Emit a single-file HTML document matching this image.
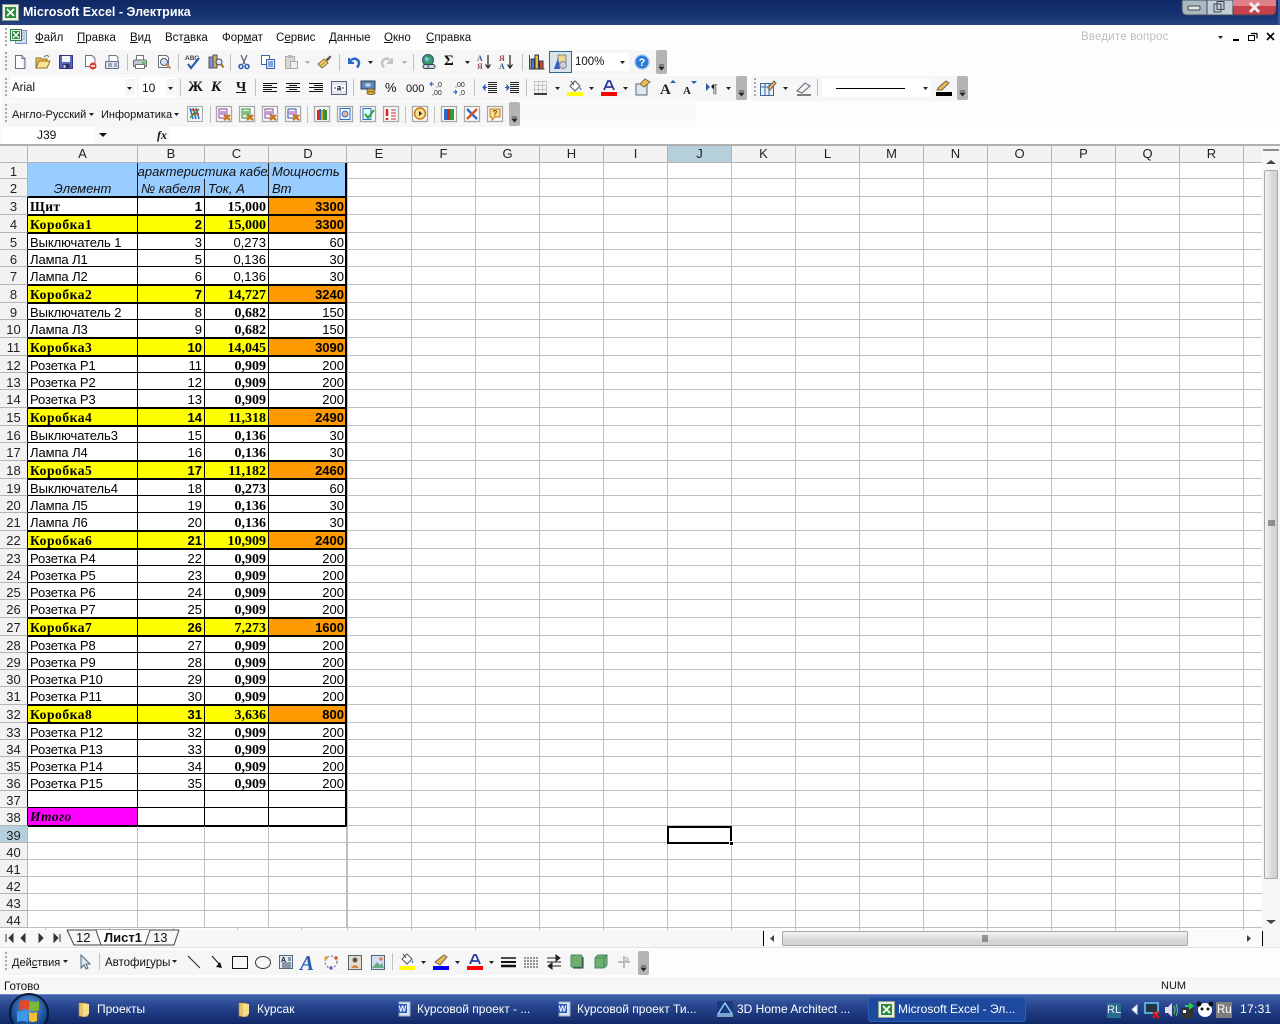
<!DOCTYPE html>
<html lang="ru"><head><meta charset="utf-8"><title>Microsoft Excel - Электрика</title>
<style>
html,body{margin:0;padding:0;width:1280px;height:1024px;overflow:hidden;background:#fdfdfd}
body{position:relative;font:12px "Liberation Sans","Noto Sans CJK SC",sans-serif;color:#000}
.a{position:absolute}
.l{position:absolute;white-space:nowrap;line-height:14px;font-size:11.5px;color:#111}
.m{font-size:11.5px}
#title{left:0;top:0;width:1280px;height:25px;background:linear-gradient(#0f2864,#14306f 50%,#27427f)}
#sheet{left:0;top:146px;width:1262px;height:784px;overflow:hidden;background:#fff repeating-linear-gradient(90deg,#c0c0c0 0 1px,transparent 1px 64px) 347px 0}
table{position:absolute;left:0;top:0;border-collapse:separate;border-spacing:0;table-layout:fixed;width:1262px}
tr{height:17px}tr.k{height:18px}tr.hd{height:17px}tr.r1{height:16px}
td,th{box-sizing:border-box;padding:4px 0 0;vertical-align:top;white-space:nowrap;font:13px/12px "Liberation Sans","Noto Sans CJK SC",sans-serif;color:#000}
td{background:#fff}
th{background:#f2f2f2;font-weight:normal;text-align:center;color:#222;border-right:1px solid #b4b4b4;border-bottom:1px solid #b4b4b4}
tr.hd th{padding-top:1px;line-height:14px}
tr.r1 th{padding-top:3px}
th.s{background:#b6cfdd}
th span{flex:none;box-sizing:border-box;width:64px;padding:1px 0;border-right:1px solid #b4b4b4}
td.e{border-bottom:1px solid #c0c0c0;background:none}
tr.g td.c{border-right:1px solid #c0c0c0;border-bottom:1px solid #c0c0c0}
tr.d th{border-right-color:#000}
tr.d td{text-align:right;padding-right:2px;border-right:1px solid #000;border-bottom:1px solid #000}
tr.x td{padding-top:3px}
tr.d td:nth-child(2){text-align:left;padding-left:2px;padding-right:0;letter-spacing:-.08px}
tr.d td:nth-child(4){font:bold 14px/10px "Liberation Serif",serif;padding-top:6px}
tr.x td:nth-child(4){padding-top:5px}
tr.p td:nth-child(4){font:13px/12px "Liberation Sans",sans-serif;padding-top:4px}
tr.x.p td:nth-child(4){padding-top:3px}
tr.d td:nth-child(5){border-right:2px solid #000;padding-right:1px}
tr.d td:nth-child(6){border-right:0;border-bottom:1px solid #c0c0c0;padding:0;background:none}
tr.x td:nth-child(-n+5){border-top:1px solid #000}
tr.y td:nth-child(-n+4){background:#ff0}
tr.y td:nth-child(2){font:bold 13.5px/15px "Liberation Serif",serif;letter-spacing:.55px}
tr.y td:nth-child(3){font-weight:bold}
tr.y td:nth-child(5),tr.o td:nth-child(5){background:#f90;font-weight:bold}
tr.y td,tr.o td{padding-top:.5px!important;line-height:15px!important}
tr.y td:nth-child(4),tr.o td:nth-child(4){padding-top:4px!important;line-height:12px!important}
td.b{background:#9cf;font-style:italic;border-right:1px solid #222;padding-left:3px;color:#111}
tr.r1 td{padding-top:3px}
td.bb{border-bottom:1px solid #000}
#sel{left:667px;top:826px;width:65px;height:18px;box-sizing:border-box;border:2px solid #000}
#han{left:729px;top:841px;background:#000;border:1px solid #fff;box-sizing:content-box;width:3px;height:3px}
.tb{font-size:12px;color:#fff;position:absolute;top:1002px;line-height:15px;white-space:nowrap}
</style></head><body>

<div class="a" id="title"></div>
<div class="a" style="left:23px;top:5px;color:#fff;font:bold 12.5px/15px 'Liberation Sans',sans-serif;white-space:nowrap">Microsoft Excel - Электрика</div>

<!-- toolbars bands -->
<div class="a" style="left:2px;top:50px;width:660px;height:25px;background:#f6f6f6;border-radius:3px"></div>
<div class="a" style="left:2px;top:76px;width:740px;height:25px;background:#f6f6f6;border-radius:3px"></div>
<div class="a" style="left:751px;top:76px;width:212px;height:25px;background:#f6f6f6;border-radius:3px"></div>
<div class="a" style="left:2px;top:102px;width:515px;height:25px;background:#f6f6f6;border-radius:3px"></div>
<div class="a" style="left:517px;top:102px;width:180px;height:25px;background:#fafafa"></div>
<!-- white inputs -->
<div class="a" style="left:10px;top:77px;width:127px;height:20px;background:#fff"></div>
<div class="a" style="left:125px;top:79px;width:10px;height:16px;background:#f5f5f5"></div>
<div class="a" style="left:139px;top:77px;width:37px;height:20px;background:#fff"></div>
<div class="a" style="left:166px;top:79px;width:9px;height:16px;background:#f5f5f5"></div>
<div class="a" style="left:573px;top:53px;width:56px;height:18px;background:#fff"></div>
<div class="a" style="left:822px;top:79px;width:109px;height:18px;background:#fff"></div>
<div class="a" style="left:1078px;top:27px;width:140px;height:19px;background:#fff"></div>
<!-- formula bar -->
<div class="a" style="left:0;top:127px;width:1280px;height:17px;background:#f8f8f8"></div>
<div class="a" style="left:2px;top:127px;width:92px;height:17px;background:#fff"></div>
<div class="a" style="left:169px;top:127px;width:1111px;height:17px;background:#fff"></div>
<div class="a" style="left:0;top:144px;width:1280px;height:2px;background:#b0b0b0"></div>

<!-- menu -->
<span class="l m" style="left:35px;top:31px"><u>Ф</u>айл</span>
<span class="l m" style="left:77px;top:31px"><u>П</u>равка</span>
<span class="l m" style="left:130px;top:31px"><u>В</u>ид</span>
<span class="l m" style="left:165px;top:31px">Вст<u>а</u>вка</span>
<span class="l m" style="left:222px;top:31px">Фор<u>м</u>ат</span>
<span class="l m" style="left:276px;top:31px">С<u>е</u>рвис</span>
<span class="l m" style="left:329px;top:31px"><u>Д</u>анные</span>
<span class="l m" style="left:384px;top:31px"><u>О</u>кно</span>
<span class="l m" style="left:426px;top:31px"><u>С</u>правка</span>
<span class="l" style="left:1081px;top:30px;color:#bbb;letter-spacing:.2px">Введите вопрос</span>

<span class="l" style="left:12px;top:81px">Arial</span>
<span class="l" style="left:142px;top:81px;font-size:12px">10</span>
<span class="l" style="left:575px;top:55px">100%</span>
<span class="l" style="left:12px;top:108px;font-size:11px">Англо-Русский</span>
<span class="l" style="left:101px;top:108px;font-size:11px">Информатика</span>
<span class="l" style="left:37px;top:128px;font-size:12px">J39</span>
<span class="l" style="left:157px;top:128px;font:italic bold 12px/14px 'Liberation Serif',serif">fx</span>
<span class="l" style="left:188px;top:80px;font:bold 15px/15px 'Liberation Serif',serif">Ж</span>
<span class="l" style="left:211px;top:80px;font:italic bold 15px/15px 'Liberation Serif',serif">К</span>
<span class="l" style="left:236px;top:80px;font:bold 14px/15px 'Liberation Serif',serif;text-decoration:underline">Ч</span>
<span class="l" style="left:385px;top:81px;font-size:13px">%</span>
<span class="l" style="left:406px;top:82px;font-size:11px">000</span>
<span class="l" style="left:444px;top:54px;font:bold 15px/15px 'Liberation Serif',serif">Σ</span>

<!-- sheet -->
<div class="a" id="sheet">
<table>
<colgroup><col style="width:28px"><col style="width:110px"><col style="width:67px"><col style="width:64px"><col style="width:78px"><col></colgroup>
<tr class="hd"><th></th><th>A</th><th>B</th><th>C</th><th style="padding-left:1px">D</th><th style="padding:0;border-right:0"><div style="display:flex;width:915px"><span style="width:65px">E</span><span>F</span><span>G</span><span>H</span><span>I</span><span style="background:#b6cfdd">J</span><span>K</span><span>L</span><span>M</span><span>N</span><span>O</span><span>P</span><span>Q</span><span>R</span></div></th></tr>
<tr class="r1"><th>1</th><td class="b bb" rowspan="2" style="text-align:center;vertical-align:bottom;padding:0;line-height:14px">Элемент</td><td class="b" colspan="2" style="padding-left:0;overflow:hidden;max-width:131px"><div style="margin-left:-9px">Характеристика кабеля</div></td><td class="b" style="border-right:2px solid #000">Мощность</td><td class="e"></td></tr>
<tr class="k"><th>2</th><td class="b bb">№ кабеля</td><td class="b bb">Ток, А</td><td class="b bb" style="border-right:2px solid #000">Вт</td><td class="e"></td></tr>
<tr class="d k x o"><th>3</th><td style="font:bold 13.5px/15px 'Liberation Serif',serif;letter-spacing:.4px">Щит</td><td style="font-weight:bold">1</td><td>15,000</td><td>3300</td><td></td></tr>
<tr class="d k x y"><th>4</th><td>Коробка1</td><td>2</td><td>15,000</td><td>3300</td><td></td></tr>
<tr class="d x p"><th>5</th><td>Выключатель 1</td><td>3</td><td>0,273</td><td>60</td><td></td></tr>
<tr class="d p"><th>6</th><td>Лампа Л1</td><td>5</td><td>0,136</td><td>30</td><td></td></tr>
<tr class="d k p"><th>7</th><td>Лампа Л2</td><td>6</td><td>0,136</td><td>30</td><td></td></tr>
<tr class="d k x y"><th>8</th><td>Коробка2</td><td>7</td><td>14,727</td><td>3240</td><td></td></tr>
<tr class="d x"><th>9</th><td>Выключатель 2</td><td>8</td><td>0,682</td><td>150</td><td></td></tr>
<tr class="d k"><th>10</th><td>Лампа Л3</td><td>9</td><td>0,682</td><td>150</td><td></td></tr>
<tr class="d k x y"><th>11</th><td>Коробка3</td><td>10</td><td>14,045</td><td>3090</td><td></td></tr>
<tr class="d x"><th>12</th><td>Розетка Р1</td><td>11</td><td>0,909</td><td>200</td><td></td></tr>
<tr class="d"><th>13</th><td>Розетка Р2</td><td>12</td><td>0,909</td><td>200</td><td></td></tr>
<tr class="d k"><th>14</th><td>Розетка Р3</td><td>13</td><td>0,909</td><td>200</td><td></td></tr>
<tr class="d k x y"><th>15</th><td>Коробка4</td><td>14</td><td>11,318</td><td>2490</td><td></td></tr>
<tr class="d x"><th>16</th><td>Выключатель3</td><td>15</td><td>0,136</td><td>30</td><td></td></tr>
<tr class="d k"><th>17</th><td>Лампа Л4</td><td>16</td><td>0,136</td><td>30</td><td></td></tr>
<tr class="d k x y"><th>18</th><td>Коробка5</td><td>17</td><td>11,182</td><td>2460</td><td></td></tr>
<tr class="d x"><th>19</th><td>Выключатель4</td><td>18</td><td>0,273</td><td>60</td><td></td></tr>
<tr class="d"><th>20</th><td>Лампа Л5</td><td>19</td><td>0,136</td><td>30</td><td></td></tr>
<tr class="d k"><th>21</th><td>Лампа Л6</td><td>20</td><td>0,136</td><td>30</td><td></td></tr>
<tr class="d k x y"><th>22</th><td>Коробка6</td><td>21</td><td>10,909</td><td>2400</td><td></td></tr>
<tr class="d x"><th>23</th><td>Розетка Р4</td><td>22</td><td>0,909</td><td>200</td><td></td></tr>
<tr class="d"><th>24</th><td>Розетка Р5</td><td>23</td><td>0,909</td><td>200</td><td></td></tr>
<tr class="d"><th>25</th><td>Розетка Р6</td><td>24</td><td>0,909</td><td>200</td><td></td></tr>
<tr class="d k"><th>26</th><td>Розетка Р7</td><td>25</td><td>0,909</td><td>200</td><td></td></tr>
<tr class="d k x y"><th>27</th><td>Коробка7</td><td>26</td><td>7,273</td><td>1600</td><td></td></tr>
<tr class="d x"><th>28</th><td>Розетка Р8</td><td>27</td><td>0,909</td><td>200</td><td></td></tr>
<tr class="d"><th>29</th><td>Розетка Р9</td><td>28</td><td>0,909</td><td>200</td><td></td></tr>
<tr class="d"><th>30</th><td>Розетка Р10</td><td>29</td><td>0,909</td><td>200</td><td></td></tr>
<tr class="d k"><th>31</th><td>Розетка Р11</td><td>30</td><td>0,909</td><td>200</td><td></td></tr>
<tr class="d k x y"><th>32</th><td>Коробка8</td><td>31</td><td>3,636</td><td>800</td><td></td></tr>
<tr class="d x"><th>33</th><td>Розетка Р12</td><td>32</td><td>0,909</td><td>200</td><td></td></tr>
<tr class="d"><th>34</th><td>Розетка Р13</td><td>33</td><td>0,909</td><td>200</td><td></td></tr>
<tr class="d"><th>35</th><td>Розетка Р14</td><td>34</td><td>0,909</td><td>200</td><td></td></tr>
<tr class="d"><th>36</th><td>Розетка Р15</td><td>35</td><td>0,909</td><td>200</td><td></td></tr>
<tr class="d"><th>37</th><td></td><td></td><td></td><td></td><td></td></tr>
<tr class="d k"><th>38</th><td style="background:#f0f;font:italic bold 13.5px/14px 'Liberation Serif',serif;letter-spacing:.5px;padding-top:2px">Итого</td><td></td><td></td><td></td><td></td></tr>
<tr class="g"><th class="s">39</th><td class="c" style="border-top:1px solid #000"></td><td class="c" style="border-top:1px solid #000"></td><td class="c" style="border-top:1px solid #000"></td><td class="c" style="border-top:1px solid #000"></td><td class="e"></td></tr>
<tr class="g"><th>40</th><td class="c"></td><td class="c"></td><td class="c"></td><td class="c"></td><td class="e"></td></tr>
<tr class="g"><th>41</th><td class="c"></td><td class="c"></td><td class="c"></td><td class="c"></td><td class="e"></td></tr>
<tr class="g"><th>42</th><td class="c"></td><td class="c"></td><td class="c"></td><td class="c"></td><td class="e"></td></tr>
<tr class="g"><th>43</th><td class="c"></td><td class="c"></td><td class="c"></td><td class="c"></td><td class="e"></td></tr>
<tr class="g"><th>44</th><td class="c"></td><td class="c"></td><td class="c"></td><td class="c"></td><td class="e"></td></tr>
</table>
</div>
<div class="a" id="sel"></div><div class="a" id="han"></div>

<!-- tab bar & scrollbars backgrounds -->
<div class="a" style="left:0;top:930px;width:1280px;height:17px;background:#f7f7f7"></div>
<div class="a" style="left:1262px;top:146px;width:18px;height:801px;background:#f6f6f6"></div>
<div class="a" style="left:0;top:947px;width:1280px;height:1px;background:#e4e4e4"></div>
<div class="a" style="left:764px;top:931px;width:498px;height:15px;background:#fbfbfb"></div>
<div class="a" style="left:782px;top:931px;width:406px;height:15px;box-sizing:border-box;border:1px solid #a8a8a8;border-radius:2px;background:linear-gradient(#f4f4f4,#d8d8d8 60%,#cfcfcf)"></div>
<div class="a" style="left:1264px;top:170px;width:14px;height:709px;box-sizing:border-box;border:1px solid #a8a8a8;border-radius:2px;background:linear-gradient(90deg,#f4f4f4,#d8d8d8 60%,#cfcfcf)"></div>
<span class="l" style="left:76px;top:931px;font-size:13px">12</span>
<span class="l" style="left:153px;top:931px;font-size:13px">13</span>

<!-- drawing toolbar -->
<div class="a" style="left:2px;top:950px;width:640px;height:25px;background:#f6f6f6;border-radius:3px"></div>
<span class="l" style="left:12px;top:956px;font-size:11px">Дей<u>с</u>твия</span>
<span class="l" style="left:105px;top:956px">Автофи<u>г</u>уры</span>

<!-- status -->
<div class="a" style="left:0;top:977px;width:1280px;height:17px;background:#f6f6f6"></div>
<span class="l" style="left:4px;top:980px">Готово</span>
<span class="l" style="left:1161px;top:979px;font-size:11px">NUM</span>

<!-- taskbar -->
<div class="a" style="left:0;top:994px;width:1280px;height:30px;background:linear-gradient(#3f60a8,#27458e 40%,#102866);border-top:1px solid #6f8bd6;box-sizing:border-box"></div>
<div class="a" style="left:868px;top:997px;width:158px;height:25px;background:#1d4a9f;border:1px solid #2d5cb4;border-radius:3px;box-sizing:border-box"></div>
<span class="tb" style="left:97px">Проекты</span>
<span class="tb" style="left:257px">Курсак</span>
<span class="tb" style="left:417px">Курсовой проект - ...</span>
<span class="tb" style="left:577px">Курсовой проект Ти...</span>
<span class="tb" style="left:737px">3D Home Architect ...</span>
<span class="tb" style="left:898px">Microsoft Excel - Эл...</span>
<div class="a" style="left:1107px;top:1003px;width:14px;height:15px;background:#2a6c8e"></div>
<span class="tb" style="left:1107px;top:1003px;font-size:11px;color:#e8f4ff">RL</span>
<div class="a" style="left:1216px;top:1002px;width:16px;height:16px;background:#7d7d7d"></div>
<span class="tb" style="left:1217px;top:1003px;font-size:11.5px">Ru</span>
<span class="tb" style="left:1240px;letter-spacing:.3px">17:31</span>

<svg class="a" style="left:0;top:0" width="1280" height="1024" viewBox="0 0 1280 1024">
<defs>
<radialGradient id="orb" cx=".5" cy=".35" r=".75"><stop offset="0" stop-color="#6aa0d8"/><stop offset=".6" stop-color="#1d4f96"/><stop offset="1" stop-color="#0d2c60"/></radialGradient>
<path id="ar" d="M0 0h5l-2.500 3z" fill="#222"/>
<g id="gr"><path d="M1 0v20" stroke="#a8a8a8" stroke-width="2" stroke-dasharray="2 2"/></g>
<g id="ch"><rect width="11" height="24" rx="2" fill="#b4b4b4"/><path d="M3 15h5M3 17h5l-2.500 3z" fill="#222" stroke="#222" stroke-width=".7"/></g>
<path id="sp" d="M0 0v17" stroke="#c0c0c0"/>
<g id="new"><path d="M3.500 1.500h6.500l3 3v10h-9.500z" fill="#fff" stroke="#6a6f80"/><path d="M10 1.500v3h3" fill="#dde" stroke="#6a6f80"/><path d="M12 5v9" stroke="#c8d0e0"/></g>
<g id="open"><path d="M1 14V4h5l1 1h5v2" fill="#e9bd57" stroke="#9a7520"/><path d="M1 14l3-7h11l-3 7z" fill="#fbe39a" stroke="#9a7520"/><path d="M9 3q3-3 5 0" stroke="#6a7a6a" fill="none"/></g>
<g id="save"><rect x="1.500" y="1.500" width="13" height="13" fill="#5a64b8" stroke="#34397f"/><rect x="4" y="2" width="8" height="6" fill="#f4f4fc"/><rect x="4.500" y="10" width="7" height="4.500" fill="#2a2f68"/><rect x="5.500" y="11" width="2" height="3" fill="#cfd0e8"/></g>
<g id="perm"><path d="M3.500 1.500h6.500l3 3v8h-9.500z" fill="#fff" stroke="#6a6f80"/><circle cx="11" cy="12" r="3.500" fill="#d93a2a"/><path d="M9 12h4" stroke="#fff" stroke-width="1.500"/></g>
<g id="mail"><path d="M5 1.500h7l2 2v6H5z" fill="#fff" stroke="#6a7590"/><rect x="1.500" y="7.500" width="13" height="7" rx="1" fill="#dfe6f2" stroke="#5a6a90"/><path d="M4 10h4M4 12h4M10 10h3M10 12h3" stroke="#667"/></g>
<g id="print"><path d="M4.500 6V1.500h7V6" fill="#fff" stroke="#777"/><path d="M1.500 7.500q0-1.500 2-1.500h9q2 0 2 1.500v5h-13z" fill="#c4c8d0" stroke="#666"/><rect x="3.500" y="10.500" width="9" height="4" fill="#fff" stroke="#777"/><rect x="10" y="8" width="3" height="1.500" fill="#2b2"/></g>
<g id="prev"><path d="M2.500 1.500h8l2 2v10h-10z" fill="#fff" stroke="#6a6f80"/><circle cx="8" cy="8" r="3.500" fill="#cfe4f5" stroke="#556"/><path d="M10.500 10.500l4 4" stroke="#c89040" stroke-width="2.200"/></g>
<g id="spell"><text x="0" y="6" font-family="Liberation Sans" font-size="6.500" font-weight="bold" fill="#444">ABC</text><path d="M3 10l3 4 8-10" stroke="#2a5ab4" stroke-width="2.200" fill="none"/></g>
<g id="res"><rect x="1" y="3" width="4" height="11" fill="#8a8ad0" stroke="#556"/><rect x="5" y="1" width="4" height="13" fill="#d0a860" stroke="#556"/><circle cx="11" cy="8" r="3" fill="#d6eafa" stroke="#445"/><path d="M13 10l2.500 3.500" stroke="#a07020" stroke-width="2"/></g>
<g id="cut"><path d="M5 1l4 9M11 1L7 10" stroke="#667" stroke-width="1.300"/><circle cx="5" cy="12.500" r="2" fill="none" stroke="#2a5ab4" stroke-width="1.500"/><circle cx="11" cy="12.500" r="2" fill="none" stroke="#2a5ab4" stroke-width="1.500"/></g>
<g id="copy"><rect x="1.500" y="1.500" width="8" height="9" fill="#fff" stroke="#3a64b0"/><rect x="6.500" y="5.500" width="8" height="9" fill="#dbe7f8" stroke="#3a64b0"/><path d="M8 8h5M8 10h5M8 12h5" stroke="#3a64b0"/></g>
<g id="paste"><rect x="2.500" y="2.500" width="9" height="12" fill="#d8d8d8" stroke="#aaa"/><rect x="5" y="1" width="4" height="3" fill="#bbb"/><rect x="7.500" y="7.500" width="7" height="7" fill="#eee" stroke="#aaa"/></g>
<g id="brush"><path d="M1 10l6-5 4 4-6 5z" fill="#f0d070" stroke="#8a7030"/><path d="M8.500 5.500L13 1.500l1.500 1.500-4 4.500z" fill="#6a5a50"/><path d="M3 12l5-4" stroke="#b09040"/></g>
<g id="undo"><path d="M3 4v5h5" fill="none" stroke="#2a66c4" stroke-width="2"/><path d="M4 8q3-5 7-2.500 4 3 0 8" fill="none" stroke="#2a66c4" stroke-width="2.500"/></g>
<g id="redo"><path d="M13 4v5H8" fill="none" stroke="#c4c4c4" stroke-width="2"/><path d="M12 8Q9 3 5 5.500q-4 3 0 8" fill="none" stroke="#c4c4c4" stroke-width="2.500"/></g>
<g id="link"><circle cx="8" cy="6" r="5.500" fill="#3a9a6a" stroke="#357"/><path d="M5 3l4 1-1 4-3-2z" fill="#7ac8e8"/><rect x="3" y="10.500" width="7" height="4" rx="2" fill="#cfd6e0" stroke="#345"/><rect x="8" y="10.500" width="7" height="4" rx="2" fill="#cfd6e0" stroke="#345"/></g>
<g id="az"><text x="0" y="7" font-family="Liberation Serif" font-size="8" font-weight="bold" fill="#35598f">А</text><text x="0" y="15" font-family="Liberation Serif" font-size="8" font-weight="bold" fill="#a05050">Я</text><path d="M11 1v12M8.500 10.500L11 14l2.500-3.500" stroke="#222" fill="none" stroke-width="1.200"/></g>
<g id="za"><text x="0" y="7" font-family="Liberation Serif" font-size="8" font-weight="bold" fill="#a05050">Я</text><text x="0" y="15" font-family="Liberation Serif" font-size="8" font-weight="bold" fill="#35598f">А</text><path d="M11 1v12M8.500 10.500L11 14l2.500-3.500" stroke="#222" fill="none" stroke-width="1.200"/></g>
<g id="chart"><path d="M.5 1v14h15" stroke="#445" fill="none"/><rect x="2" y="5" width="3.500" height="10" fill="#4a78c8" stroke="#334"/><rect x="6" y="1" width="3.500" height="14" fill="#e0c040" stroke="#334"/><rect x="10.500" y="7" width="3.500" height="8" fill="#c84a3a" stroke="#334"/></g>
<g id="draw"><rect x="6" y="1" width="8" height="8" fill="#e8d890" stroke="#887"/><path d="M2 15L6 4l2 11z" fill="#3a5ab8"/><circle cx="11" cy="11" r="3.500" fill="#ccd" stroke="#889"/></g>
<g id="help"><circle cx="8" cy="8" r="7" fill="#2f7ad8" stroke="#a4c8f0" stroke-width="1.300"/><text x="8" y="12" text-anchor="middle" font-family="Liberation Sans" font-weight="bold" font-size="11" fill="#fff">?</text></g>
<g id="al" stroke="#111"><path d="M1 3.500h14M1 5.500h9M1 7.500h14M1 9.500h9M1 11.500h14"/></g>
<g id="ac" stroke="#111"><path d="M1 3.500h14M4 5.500h8M1 7.500h14M4 9.500h8M1 11.500h14"/></g>
<g id="ar2" stroke="#111"><path d="M1 3.500h14M6 5.500h9M1 7.500h14M6 9.500h9M1 11.500h14"/></g>
<g id="merge"><rect x=".5" y="1.500" width="15" height="13" fill="#e0e6f4" stroke="#567"/><rect x="2" y="5" width="12" height="6" fill="#fff"/><path d="M3 8h2M11 8h2" stroke="#337"/><text x="8" y="10.500" text-anchor="middle" font-size="8" font-weight="bold" font-family="Liberation Sans" fill="#000">a</text></g>
<g id="cur"><rect x="1" y="1" width="14" height="8" fill="#5a84c0" stroke="#345"/><ellipse cx="8" cy="5" rx="3" ry="2" fill="#bcd"/><ellipse cx="11" cy="10.500" rx="4" ry="1.500" fill="#e0b030" stroke="#864"/><ellipse cx="11" cy="13" rx="4" ry="1.500" fill="#e0b030" stroke="#864"/></g>
<g id="dinc"><path d="M1 4h4M1 4l2-2M1 4l2 2" stroke="#2a5ab4" fill="none"/><text x="7" y="7" font-size="7" font-family="Liberation Sans" fill="#222">,0</text><text x="3" y="15" font-size="7" font-family="Liberation Sans" fill="#222">,00</text></g>
<g id="ddec"><text x="3" y="7" font-size="7" font-family="Liberation Sans" fill="#222">,00</text><path d="M1 12h4M5 12l-2-2M5 12l-2 2" stroke="#2a5ab4" fill="none"/><text x="7" y="15" font-size="7" font-family="Liberation Sans" fill="#222">,0</text></g>
<g id="ind1"><path d="M6 2.500h9M6 4.500h9M6 6.500h9M6 8.500h9M6 10.500h9M6 12.500h9" stroke="#222"/><path d="M5 7.500L1 7.500M1 7.500l2-2.500v5z" stroke="#2a5ab4" fill="#2a5ab4"/></g>
<g id="ind2"><path d="M6 2.500h9M6 4.500h9M6 6.500h9M6 8.500h9M6 10.500h9M6 12.500h9" stroke="#222"/><path d="M1 7.500h4M5 7.500l-2-2.500v5z" stroke="#2a5ab4" fill="#2a5ab4"/></g>
<g id="bord"><path d="M1.500 1.500v12M5.500 1.500v12M9.500 1.500v12M13.500 1.500v12M1.500 1.500h12M1.500 5.500h12M1.500 9.500h12" stroke="#999" stroke-dasharray="1 1" fill="none"/><path d="M1 14h13" stroke="#000" stroke-width="1.500"/></g>
<g id="fill"><path d="M3 7l5-5 5 5-5 5z" fill="#fff" stroke="#555"/><path d="M4 2l3 4" stroke="#444"/><path d="M13 8q2 2 1 3-2 0-1-3z" fill="#3a7ac8"/></g>
<g id="fc"><path d="M3 10L7 1h2l4 9M5 7h6" fill="none" stroke="#2a3a9a" stroke-width="1.800"/></g>
<g id="bk"><rect x=".5" y=".5" width="15" height="15" fill="#fcfcfa" stroke="#a8a8a8" stroke-width="1.300"/></g>
<g id="f1"><use href="#bk"/><rect x="3" y="3" width="8" height="9" fill="#fff" stroke="#8a3aa0"/><path d="M4 6h6M4 8h6" stroke="#8a3aa0"/><path d="M8 9l6 5M14 9l-6 5" stroke="#c87818" stroke-width="2.200"/></g>
<g id="f2"><use href="#bk"/><rect x="3" y="3" width="8" height="9" fill="#dff0d8" stroke="#2a8a3a"/><path d="M4 6h6M4 8h6" stroke="#2a8a3a"/><path d="M8 9l6 5M14 9l-6 5" stroke="#c87818" stroke-width="2.200"/></g>
<g id="f3"><use href="#bk"/><rect x="3" y="3" width="8" height="9" fill="#fff" stroke="#2a4ab0"/><path d="M4 6h6M4 8h6" stroke="#b03a9a"/><path d="M8 9l6 5M14 9l-6 5" stroke="#c87818" stroke-width="2.200"/></g>
<g id="f4"><use href="#bk"/><path d="M3 4h2v10H3z" fill="#d22"/><path d="M5 3h2v11H5z" fill="#2a6ad0"/><path d="M7 4h2v10H7z" fill="#e0a020"/><path d="M9 3h2v11H9z" fill="#2a9a3a"/><path d="M11 4h2v10h-2z" fill="#3a8a3a"/></g>
<g id="f5"><use href="#bk"/><rect x="3" y="2.500" width="10" height="11" fill="#fff" stroke="#2a6ad0"/><circle cx="8" cy="8" r="3" fill="#f0b0a0" stroke="#2a6ad0"/></g>
<g id="f6"><use href="#bk"/><rect x="3" y="2.500" width="8" height="11" fill="#dff" stroke="#2a6ad0"/><path d="M5 8l3 4 6-8" stroke="#2aa03a" stroke-width="2" fill="none"/></g>
<g id="f7"><use href="#bk"/><path d="M4 3v7M4 12v2" stroke="#d22" stroke-width="2.500"/><path d="M8 4h5M8 7h5M8 10h5M8 13h5" stroke="#d22"/></g>
<g id="f8"><use href="#bk"/><circle cx="8" cy="7.500" r="5.500" fill="#f8e090" stroke="#c87818" stroke-width="1.500"/><path d="M7 5l3 2.500L7 10z" fill="#222"/></g>
<g id="f9"><use href="#bk"/><path d="M3 3h3v11H3z" fill="#2a6ad0"/><path d="M6 3h3v11H6z" fill="#d22"/><path d="M9 3h4v11H9z" fill="#2a9a3a"/></g>
<g id="f10"><use href="#bk"/><path d="M3 3l10 10" stroke="#2a6ad0" stroke-width="2.500"/><path d="M13 3L3 13" stroke="#d8502a" stroke-width="2.500"/></g>
<g id="f11"><use href="#bk"/><path d="M3 3h10v8H8l-3 3v-3H3z" fill="#fbe08a" stroke="#c87818"/><text x="8" y="10" text-anchor="middle" font-size="8" font-weight="bold" font-family="Liberation Sans" fill="#642">?</text></g>
<g id="folder"><path d="M2 2h6l3 1v12l-3 1-6-1z" fill="#e8c468" stroke="#a88838" stroke-width=".6"/><path d="M6 3h6v10l-6 3z" fill="#f6dd90"/></g>
<g id="word"><rect x="2" y="1" width="11" height="14" fill="#d8e4f6" stroke="#9ab"/><rect x="1" y="3" width="9" height="9" fill="#2a5ab4"/><text x="5.500" y="10.500" text-anchor="middle" font-size="8" font-weight="bold" font-family="Liberation Sans" fill="#fff">W</text></g>
<g id="xl"><rect x=".5" y=".5" width="16" height="16" fill="#e9efe6" stroke="#8fa08f"/><rect x="3" y="3" width="11" height="11" fill="#2c8a3c"/><path d="M5 5l7 7M12 5l-7 7" stroke="#fff" stroke-width="1.800"/></g>
</defs>

<!-- title icon and window buttons -->
<use href="#xl" x="2" y="4"/>
<g>
<path d="M1182 0h25v15h-20q-5 0-5-5z" fill="#a8bac0" stroke="#404860"/>
<rect x="1188" y="6" width="12" height="4" rx="1" fill="#e4e4e4" stroke="#445"/>
<rect x="1207" y="0" width="26" height="15" fill="#c0ced4" stroke="#404860"/>
<rect x="1214" y="4" width="7" height="8" fill="none" stroke="#445"/><rect x="1217" y="1.500" width="7" height="8" fill="none" stroke="#445"/>
<path d="M1233 0h43v10q0 5-5 5h-38z" fill="#c8404a" stroke="#404860"/><path d="M1233 0h43v6h-43z" fill="#df8088"/>
<path d="M1250 3l9 9M1259 3l-9 9" stroke="#eee" stroke-width="3"/>
<rect x="1278" y="0" width="2" height="25" fill="#3a5aa0"/>
</g>
<!-- menu bar right -->
<use href="#ar" x="1218" y="36"/>
<path d="M1233 40h6" stroke="#000" stroke-width="2"/>
<rect x="1248.500" y="35.500" width="6" height="5" fill="none" stroke="#000"/><path d="M1251 33.500h6v5" stroke="#000" fill="none" stroke-width="1.200"/>
<path d="M1267 33l7 7M1274 33l-7 7" stroke="#000" stroke-width="1.600"/>
<!-- doc icon + menu gripper -->
<use href="#gr" x="5" y="28"/>
<rect x="15.500" y="30.500" width="11" height="13" fill="#d4e0f2" stroke="#7a90b8"/><path d="M22 33h3M22 36h3M22 39h3" stroke="#8aa"/>
<rect x="10.500" y="29.500" width="11" height="11" fill="#e9efe6" stroke="#2c7a3c"/><rect x="12" y="31" width="8" height="8" fill="#2c8a3c"/><path d="M13 32l6 6M19 32l-6 6" stroke="#fff" stroke-width="1.400"/>

<!-- toolbar 1 -->
<use href="#gr" x="5" y="52"/>
<use href="#new" x="12" y="54"/><use href="#open" x="35" y="54"/><use href="#save" x="58" y="54"/><use href="#perm" x="82" y="54"/><use href="#mail" x="104" y="54"/>
<use href="#sp" x="127.500" y="54"/>
<use href="#print" x="132" y="54"/><use href="#prev" x="156" y="54"/>
<use href="#sp" x="178.500" y="54"/>
<use href="#spell" x="185" y="54"/><use href="#res" x="208" y="54"/>
<use href="#sp" x="230.500" y="54"/>
<use href="#cut" x="236" y="54"/><use href="#copy" x="260" y="54"/><use href="#paste" x="283" y="54"/><use href="#ar" x="305" y="61" opacity=".35"/><use href="#brush" x="317" y="54"/>
<use href="#sp" x="339.500" y="54"/>
<use href="#undo" x="346" y="54"/><use href="#ar" x="368" y="61"/><use href="#redo" x="379" y="54"/><use href="#ar" x="402" y="61" opacity=".35"/>
<use href="#sp" x="413.500" y="54"/>
<use href="#link" x="420" y="54"/><use href="#ar" x="465" y="61"/><use href="#az" x="477" y="54"/><use href="#za" x="499" y="54"/>
<use href="#sp" x="522.500" y="54"/>
<use href="#chart" x="529" y="54"/>
<rect x="549.500" y="51.500" width="22" height="21" fill="#d8e4ec" stroke="#316a8e"/><use href="#draw" x="552" y="54"/>
<use href="#ar" x="620" y="61"/><use href="#help" x="634" y="54"/>
<use href="#ch" x="656" y="50"/>

<!-- toolbar 2 -->
<use href="#gr" x="5" y="78"/>
<use href="#ar" x="127" y="87"/><use href="#ar" x="168" y="87"/>
<use href="#sp" x="180.500" y="79"/><use href="#sp" x="255.500" y="79"/>
<use href="#al" x="262" y="80"/><use href="#ac" x="285" y="80"/><use href="#ar2" x="308" y="80"/><use href="#merge" x="331" y="80"/>
<use href="#sp" x="353.500" y="79"/>
<use href="#cur" x="360" y="80"/>
<use href="#dinc" x="429" y="80"/><use href="#ddec" x="452" y="80"/>
<use href="#sp" x="474.500" y="79"/>
<use href="#ind1" x="482" y="80"/><use href="#ind2" x="504" y="80"/>
<use href="#sp" x="526.500" y="79"/>
<use href="#bord" x="533" y="80"/><use href="#ar" x="555" y="87"/>
<use href="#fill" x="567" y="79"/><rect x="567" y="92" width="16" height="4" fill="#ff0"/><use href="#ar" x="589" y="87"/>
<use href="#fc" x="601" y="80"/><rect x="601" y="92" width="16" height="4" fill="#f00"/><use href="#ar" x="623" y="87"/>
<rect x="636" y="84" width="11" height="11" fill="#dfe6f2" stroke="#567"/><path d="M640 84l5-5 5 3-6 5z" fill="#e8c048" stroke="#765"/>
<text x="660" y="94" font-family="Liberation Serif" font-weight="bold" font-size="15" fill="#222">A</text><path d="M670 83l3-3 3 3z" fill="#2a5ab4"/>
<text x="683" y="94" font-family="Liberation Serif" font-weight="bold" font-size="11" fill="#222">A</text><path d="M691 81l3 3 3-3z" fill="#2a5ab4"/>
<path d="M706 83l4 4-4 4z" fill="#2a5ab4"/><text x="711" y="93" font-family="Liberation Sans" font-size="12" fill="#222">¶</text><use href="#ar" x="726" y="87"/>
<use href="#ch" x="736" y="76"/>

<!-- toolbar 3 (borders) -->
<use href="#gr" x="754" y="78"/>
<rect x="760.500" y="83.500" width="13" height="12" fill="#e8f0fa" stroke="#3a6a9a"/><path d="M761 87h12M765 84v11M769 84v11" stroke="#3a6a9a"/><path d="M768 88l6-7 2 2-6 7z" fill="#e8b850" stroke="#765"/>
<use href="#ar" x="783" y="87"/>
<path d="M797 91l8-8 5 3-8 7z" fill="#f4f4f4" stroke="#567"/><path d="M797 95h14" stroke="#000"/>
<use href="#sp" x="817.500" y="79"/>
<path d="M836 88.500h69" stroke="#000" stroke-width="1"/>
<use href="#ar" x="923" y="87"/>
<path d="M937 90l2-3 7-6 3 2-7 7z" fill="#e8b850" stroke="#765"/><rect x="936" y="92" width="16" height="4" fill="#000"/>
<use href="#ch" x="957" y="76"/>

<!-- toolbar row 3 -->
<use href="#gr" x="5" y="104"/>
<use href="#ar" x="89" y="113"/><use href="#ar" x="174" y="113"/>
<rect x="187.500" y="106.500" width="15" height="15" fill="#f4f4f0" stroke="#aaa"/><path d="M190 108l3 11M193 108l3 11M196 108l3 11" stroke="#2a6ad0" stroke-width="1.500"/><path d="M191 110h8M191 114h8" stroke="#d8402a" stroke-width="1.500"/><path d="M190 118l9-9" stroke="#2aa03a" stroke-width="1.500"/>
<use href="#sp" x="210.500" y="106"/>
<use href="#f1" x="216" y="106"/><use href="#f2" x="239" y="106"/><use href="#f1" x="262" y="106"/><use href="#f3" x="285" y="106"/>
<use href="#sp" x="307.500" y="106"/>
<use href="#f4" x="314" y="106"/><use href="#f5" x="337" y="106"/><use href="#f6" x="360" y="106"/><use href="#f7" x="383" y="106"/>
<use href="#sp" x="405.500" y="106"/>
<use href="#f8" x="412" y="106"/>
<use href="#sp" x="434.500" y="106"/>
<use href="#f9" x="441" y="106"/><use href="#f10" x="464" y="106"/><use href="#f11" x="487" y="106"/>
<use href="#ch" x="509" y="102"/>

<!-- formula arrow -->
<path d="M99 133h8l-4 4z" fill="#111"/>

<!-- sheet tabs -->
<path d="M67 930h112M67 930l7 15h27M145 945h29l5-15" fill="none" stroke="#444"/>
<path d="M96 930l5 15h44l5-15" fill="#fff" stroke="#444"/>
<path d="M6 934v8M13 934l-4 4 4 4z M25 934l-4 4 4 4z M39 934l4 4-4 4z M54 934l4 4-4 4z" fill="#333" stroke="#333"/><path d="M60 934v8" stroke="#333"/>
<path d="M763.500 931v15M1262.500 931v15" stroke="#000"/>
<path d="M774 935l-4 3.500 4 3.500zM1247 935l4 3.500-4 3.500z" fill="#444"/>
<path d="M983 935v7M985 935v7M987 935v7" stroke="#444"/>
<!-- vertical scrollbar -->
<path d="M1263 150h16" stroke="#222"/>
<path d="M1266 164h10l-5-4zM1266 920h10l-5 4z" fill="#444"/>
<path d="M1268 521h7M1268 523h7M1268 525h7" stroke="#444"/>

<!-- drawing toolbar -->
<use href="#gr" x="5" y="952"/>
<use href="#ar" x="63" y="960"/><use href="#ar" x="172" y="960"/>
<path d="M81 955v13l3-3 2 4 2-1-2-4h4z" fill="#dbe6f6" stroke="#567"/>
<use href="#sp" x="99.500" y="953"/>
<path d="M188 956l12 12" stroke="#222"/><path d="M212 956l8 9" stroke="#111"/><path d="M222 968l-6-1 4-5z" fill="#111"/>
<rect x="232.500" y="956.500" width="15" height="12" fill="none" stroke="#111"/>
<ellipse cx="263" cy="962.500" rx="7.500" ry="6" fill="none" stroke="#333"/>
<rect x="279.500" y="955.500" width="13" height="13" fill="#dfe8f6" stroke="#567"/><path d="M288 958h3M288 960h3M282 963h9M282 965h9M282 967h9" stroke="#345"/><text x="281" y="962" font-family="Liberation Sans" font-weight="bold" font-size="7" fill="#111">A</text>
<text x="300" y="970" font-family="Liberation Serif" font-weight="bold" font-style="italic" font-size="21" fill="#2a5ab4">A</text>
<circle cx="331" cy="962" r="6" fill="none" stroke="#567" stroke-dasharray="2 2"/><circle cx="326" cy="958" r="1.700" fill="#e0a030"/><circle cx="336" cy="958" r="1.700" fill="#d84a3a"/><circle cx="331" cy="968" r="1.700" fill="#5060c8"/>
<rect x="348.500" y="955.500" width="13" height="14" fill="#e8dcc8" stroke="#567"/><circle cx="355" cy="960" r="2.500" fill="#555"/><path d="M351 968q4-6 8 0z" fill="#c84"/>
<rect x="371.500" y="955.500" width="13" height="14" fill="#cfe0f4" stroke="#567"/><path d="M372 968l5-6 3 3 2-2 2 5z" fill="#6a8"/><circle cx="381" cy="959" r="1.700" fill="#e8783a"/>
<use href="#sp" x="392.500" y="953"/>
<use href="#fill" x="399" y="952"/><rect x="399" y="966" width="16" height="4" fill="#ff0"/><use href="#ar" x="421" y="961"/>
<path d="M435 962l9-7 3 2-7 8z" fill="#e8b850" stroke="#765"/><rect x="433" y="966" width="16" height="4" fill="#00f"/><use href="#ar" x="455" y="961"/>
<use href="#fc" x="467" y="954"/><rect x="467" y="966" width="16" height="4" fill="#f00"/><use href="#ar" x="489" y="961"/>
<path d="M501 958h15" stroke="#111" stroke-width="1.500"/><path d="M501 962h15" stroke="#111" stroke-width="2"/><path d="M501 966h15" stroke="#111" stroke-width="2.500"/>
<path d="M524 958h15M524 961h15M524 964h15M524 967h15" stroke="#333" stroke-dasharray="2 1"/>
<path d="M547 958h13M560 958l-4-3v6zM561 962h-14M561 966h-13M548 966l4-3v6z" stroke="#222" fill="#222"/>
<rect x="571" y="955" width="11" height="12" rx="1" fill="#6fb06f" stroke="#486"/><path d="M573 968h10v-11" stroke="#333" fill="none"/>
<path d="M595 958l3-3h9v10l-3 3h-9z" fill="#6fb06f" stroke="#486"/><path d="M595 958h9v10M604 958l3-3" stroke="#486" fill="none"/>
<path d="M624 956v12M618 962h12" stroke="#bbb" stroke-width="2"/><rect x="624" y="958" width="4" height="3" fill="#ddd" stroke="#bbb"/>
<use href="#ch" x="638" y="951"/>

<!-- taskbar icons -->
<circle cx="29" cy="1013" r="19" fill="url(#orb)" stroke="#081838" stroke-width="2"/>
<path d="M20 1001q5-2 9 0v9q-4-2-9 0z" fill="#e04a2a"/><path d="M30 1001q5 2 9 0v9q-4 2-9 0z" fill="#7ab83a"/><path d="M17 1012q6-2 11 0v10q-5-2-11 0z" fill="#3a9ae8"/><path d="M29 1012q4 2 8 0v9q-4 2-8 0z" fill="#f0c030"/>
<use href="#folder" x="77" y="1001"/><use href="#folder" x="237" y="1001"/>
<use href="#word" x="397" y="1001"/><use href="#word" x="557" y="1001"/>
<rect x="717" y="1001" width="16" height="16" fill="#1a3a7a"/><path d="M718 1014l7-11 7 11z" fill="none" stroke="#8cf" stroke-width="1.500"/><path d="M717 1016h16" stroke="#fff"/>
<use href="#xl" x="878" y="1001"/>
<path d="M1137 1005l-5 4.500 5 4.500z" fill="#fff" stroke="#cde"/>
<rect x="1145" y="1003" width="13" height="10" fill="#234" stroke="#6cf" stroke-width="1.500"/><path d="M1153 1012l6 6M1159 1012l-6 6" stroke="#e11" stroke-width="2"/>
<path d="M1165 1007h3l4-4v14l-4-4h-3z" fill="#dde"/><path d="M1174 1006q2 4 0 8M1176 1004q3 6 0 12" stroke="#6c6" fill="none"/>
<rect x="1181" y="1008" width="12" height="10" fill="#333"/><rect x="1183" y="1010" width="3" height="3" fill="#fff"/><path d="M1185 1005h4v-3l5 4-5 4v-3h-4z" fill="#2c4"/>
<circle cx="1205" cy="1010" r="7" fill="#fff"/><circle cx="1199" cy="1004" r="2.500" fill="#111"/><circle cx="1211" cy="1004" r="2.500" fill="#111"/><circle cx="1202" cy="1009" r="1.500" fill="#111"/><circle cx="1208" cy="1009" r="1.500" fill="#111"/>
</svg>
<span class="l" style="left:104px;top:931px;font:bold 13px/14px 'Liberation Sans',sans-serif">Лист1</span>
</body></html>
